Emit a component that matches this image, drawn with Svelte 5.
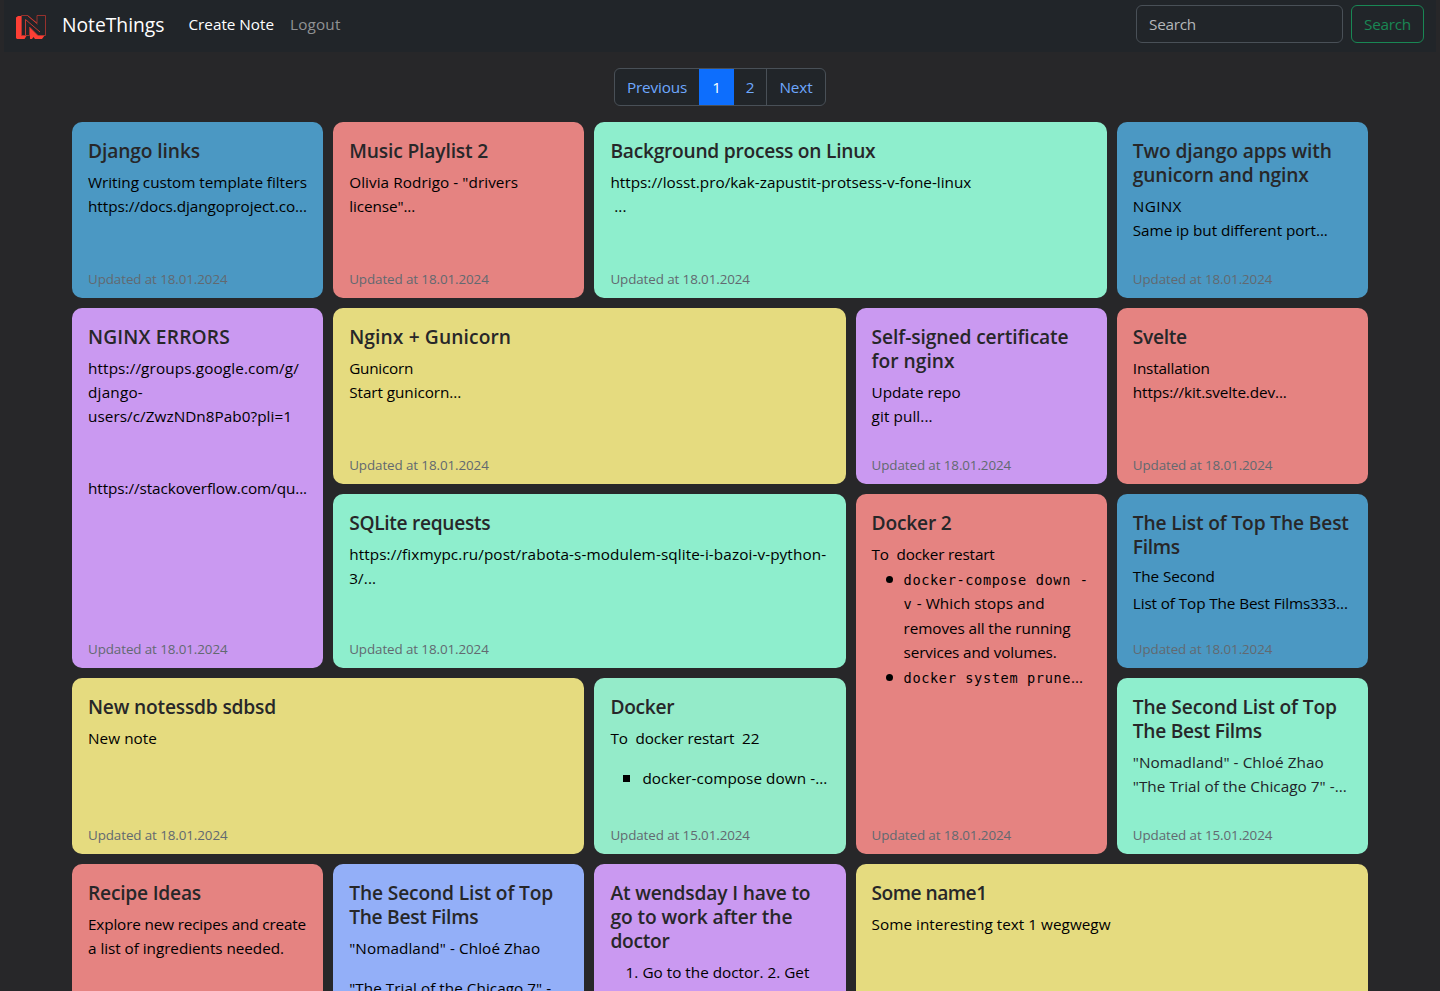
<script lang="ts">
  type Line = { t: string; w: number; h?: number; x?: number; mark?: string; mono?: boolean; rest?: string; restW?: number; dim?: boolean };
  type Note = { color: string; wide?: boolean; tall?: boolean; snug?: boolean; title: [string, number][]; lines: Line[]; date: string };

  const notes: Note[] = [
    { color: 'blue', title: [['Django links', 112]], date: '18.01.2024', lines: [
      { t: 'Writing custom template filters', w: 219 }, { t: 'https://docs.djangoproject.co...', w: 219 }] },
    { color: 'red', title: [['Music Playlist 2', 139]], date: '18.01.2024', lines: [
      { t: 'Olivia Rodrigo - "drivers', w: 169 }, { t: 'license"...', w: 66 }] },
    { color: 'green', wide: true, title: [['Background process on Linux', 265]], date: '18.01.2024', lines: [
      { t: 'https://losst.pro/kak-zapustit-protsess-v-fone-linux', w: 361 }, { t: ' ...', w: 16 }] },
    { color: 'blue', title: [['Two django apps with', 199], ['gunicorn and nginx', 176]], date: '18.01.2024', lines: [
      { t: 'NGINX', w: 49 }, { t: 'Same ip but different port...', w: 195 }] },
    { color: 'violet', tall: true, title: [['NGINX ERRORS', 142]], date: '18.01.2024', lines: [
      { t: 'https://groups.google.com/g/', w: 211 }, { t: 'django-', w: 55 },
      { t: 'users/c/ZwzNDn8Pab0?pli=1', w: 204, h: 72 }, { t: 'https://stackoverflow.com/qu...', w: 219 }] },
    { color: 'yellow', wide: true, title: [['Nginx + Gunicorn', 162]], date: '18.01.2024', lines: [
      { t: 'Gunicorn', w: 64 }, { t: 'Start gunicorn...', w: 112 }] },
    { color: 'violet', title: [['Self-signed certificate', 197], ['for nginx', 83]], date: '18.01.2024', lines: [
      { t: 'Update repo', w: 89 }, { t: 'git pull...', w: 61 }] },
    { color: 'red', title: [['Svelte', 54]], date: '18.01.2024', lines: [
      { t: 'Installation', w: 77 }, { t: 'https://kit.svelte.dev...', w: 154 }] },
    { color: 'green', wide: true, title: [['SQLite requests', 141]], date: '18.01.2024', lines: [
      { t: 'https://fixmypc.ru/post/rabota-s-modulem-sqlite-i-bazoi-v-python-', w: 477 }, { t: '3/...', w: 27 }] },
    { color: 'red', tall: true, title: [['Docker 2', 80]], date: '18.01.2024', lines: [
      { t: 'To  docker restart', w: 123, h: 24.5 },
      { t: 'docker-compose down -', w: 185, h: 24.5, x: 32, mark: 'disc', mono: true },
      { t: 'v', w: 9, h: 24.5, x: 32, mono: true, rest: ' - Which stops and', restW: 132 },
      { t: 'removes all the running', w: 167, h: 24.5, x: 32 },
      { t: 'services and volumes.', w: 153, h: 24.5, x: 32 },
      { t: 'docker system prune', w: 167.5, h: 24.5, x: 32, mark: 'disc', mono: true, rest: '...', restW: 12 }] },
    { color: 'blue', snug: true, title: [['The List of Top The Best', 216], ['Films', 47]], date: '18.01.2024', lines: [
      { t: 'The Second', w: 82, h: 27 }, { t: 'List of Top The Best Films333...', w: 215 }] },
    { color: 'yellow', wide: true, title: [['New notessdb sdbsd', 188]], date: '18.01.2024', lines: [
      { t: 'New note', w: 69 }] },
    { color: 'mint', title: [['Docker', 64]], date: '15.01.2024', lines: [
      { t: 'To  docker restart  22', w: 149, h: 40 },
      { t: 'docker-compose down -...', w: 185, x: 32, mark: 'square' }] },
    { color: 'green', title: [['The Second List of Top', 204], ['The Best Films', 129]], date: '15.01.2024', lines: [
      { t: '"Nomadland" - Chloé Zhao', w: 191, dim: true }, { t: '"The Trial of the Chicago 7" -...', w: 214, dim: true }] },
    { color: 'red', title: [['Recipe Ideas', 113]], date: '15.01.2024', lines: [
      { t: 'Explore new recipes and create', w: 218 }, { t: 'a list of ingredients needed.', w: 196 }] },
    { color: 'sky', title: [['The Second List of Top', 204], ['The Best Films', 129]], date: '15.01.2024', lines: [
      { t: '"Nomadland" - Chloé Zhao', w: 191, h: 40 }, { t: '"The Trial of the Chicago 7" -', w: 202 }] },
    { color: 'violet', title: [['At wendsday I have to', 200], ['go to work after the', 182], ['doctor', 59]], date: '15.01.2024', lines: [
      { t: 'Go to the doctor. 2. Get', w: 167, x: 32, mark: 'one' }, { t: 'a new prescription d', w: 168, x: 32 }] },
    { color: 'yellow', wide: true, title: [['Some name1', 115]], date: '15.01.2024', lines: [
      { t: 'Some interesting text 1 wegwegw', w: 239 }] }
  ];

  // Spreads the tracking of a line so that it takes the given width.
  function fit(node: HTMLElement, width: number) {
    const extra = width - node.getBoundingClientRect().width;
    node.style.letterSpacing = `${extra / (node.textContent ?? '').length}px`;
  }
</script>

<nav>
  <svg class="logo" viewBox="0 0 30 24" width="30" height="24">
    <path fill="#fd3f35" d="M0 2.500 2 1h4v19h5l-2.500 4H1l-1-1zM13.500 11l9 9H29l-3 4h-7l-1.500-2-1.500 2h-2z" />
    <path fill="#212529" stroke="#b5352f" stroke-width=".8" d="M5.500.5h6L21 8V.5h8.500v20H22L13.500 12v8.500h-8z" />
    <path fill="none" stroke="#c53a32" stroke-width="1" d="M9.500 20V4.500L24 17M11.500.5l10 8.500" />
  </svg>
  <span class="brand" use:fit={102.5}>NoteThings</span>
  <a class="link on" href="#create"><span use:fit={85.5}>Create Note</span></a>
  <a class="link" href="#logout"><span use:fit={50.5}>Logout</span></a>
  <form>
    <div class="field"><span use:fit={47}>Search</span></div>
    <button type="button"><span use:fit={47}>Search</span></button>
  </form>
</nav>

<main>
  <div class="pages">
    <a class="prev" href="#prev"><span use:fit={60}>Previous</span></a>
    <a class="num active" href="#1">1</a>
    <a class="num" href="#2">2</a>
    <a class="next" href="#next"><span use:fit={33}>Next</span></a>
  </div>
  <div class="grid">
    {#each notes as note}
      <article class={note.color} class:wide={note.wide} class:tall={note.tall} class:snug={note.snug}>
        <h5>
          {#each note.title as [text, w]}
            <div><span use:fit={w}>{text}</span></div>
          {/each}
        </h5>
        <div class="text">
          {#each note.lines as l}
            <div class="line" class:dim={l.dim} style:height="{l.h ?? 24}px" style:padding-left="{l.x ?? 0}px">
              {#if l.mark}<i class={l.mark}>{l.mark === 'one' ? '1.' : ''}</i>{/if}<span class:mono={l.mono} use:fit={l.w}>{l.t}</span>{#if l.rest}<span use:fit={l.restW ?? 0}>{l.rest}</span>{/if}
            </div>
          {/each}
        </div>
        <small><span use:fit={139.5}>Updated at {note.date}</span></small>
      </article>
    {/each}
  </div>
</main>

<style>
  :global(body) { background: #272729; overflow: hidden; }
  :global(#app) { height: 991px; overflow: hidden; font: 15.3px/24px "Open Sans", "Noto Sans", sans-serif; color: #000; }
  span { white-space: pre; }
  a { text-decoration: none; }
  nav { height: 52px; margin: 0 4px; padding: 0 12px 4px; box-sizing: border-box; background: #212529; display: flex; align-items: center; }
  .logo { margin: 5px 16px 0 0; flex: none; }
  .brand { font-size: 19.3px; line-height: 30px; color: #fff; margin: 1px 24px 0 0; }
  .link { color: #909294; margin-right: 16px; }
  .link.on { color: #fff; }
  form { margin-left: auto; display: flex; gap: 8px; }
  .field, button { box-sizing: border-box; height: 38px; border: 1px solid #495057; border-radius: 6px; padding: 6px 12px; font: inherit; background: #212529; }
  .field { width: 207px; color: #b4b7ba; }
  button { width: 73px; border-color: #198754; color: #198754; }
  main { padding: 16px 72px 0; }
  .pages { display: flex; width: 212px; height: 38px; margin: 0 auto 16px; box-sizing: border-box; border: 1px solid #495057; border-radius: 6px; background: #212529; overflow: hidden; }
  .pages a { color: #6ea8fe; line-height: 37px; text-align: center; }
  .prev { width: 84px; }
  .num { width: 33px; border-right: 1px solid #495057; box-sizing: border-box; }
  .pages .active { background: #0d6efd; color: #fff; width: 35px; margin: -1px 0; border: 0; line-height: 39px; }
  .next { flex: 1; }
  .grid { display: grid; grid-template-columns: repeat(5, 1fr); grid-template-rows: 176px 176px 174px 176px 176px; gap: 10px; }
  article { border-radius: 10px; padding: 17px 16px 8px; display: flex; flex-direction: column; min-width: 0; overflow: hidden; }
  .wide { grid-column: span 2; }
  .tall { grid-row: span 2; }
  .blue { background: #4b98c3; }
  .red { background: #e58381; }
  .green { background: #8eeecd; }
  .mint { background: #94ebc9; }
  .violet { background: #ca99f1; }
  .yellow { background: #e5db7f; }
  .sky { background: #93aff8; }
  h5 { margin: 0 0 7px; font-size: 19.2px; font-weight: 600; line-height: 24px; color: #272729; }
  .snug h5 { margin-bottom: 5px; }
  .text { flex: 1; }
  .line { position: relative; box-sizing: border-box; white-space: nowrap; }
  .dim { color: #212529; }
  .mono { font-family: "DejaVu Sans Mono", monospace; font-size: 13.6px; line-height: 20px; }
  i { position: absolute; font-style: normal; }
  .disc { width: 7px; height: 7px; border-radius: 50%; background: #000; left: 14px; top: 9px; }
  .square { width: 7px; height: 7px; background: #000; left: 13px; top: 9px; }
  .one { left: 15px; }
  small { font-size: 13.4px; line-height: 21px; color: #626970; }
</style>
